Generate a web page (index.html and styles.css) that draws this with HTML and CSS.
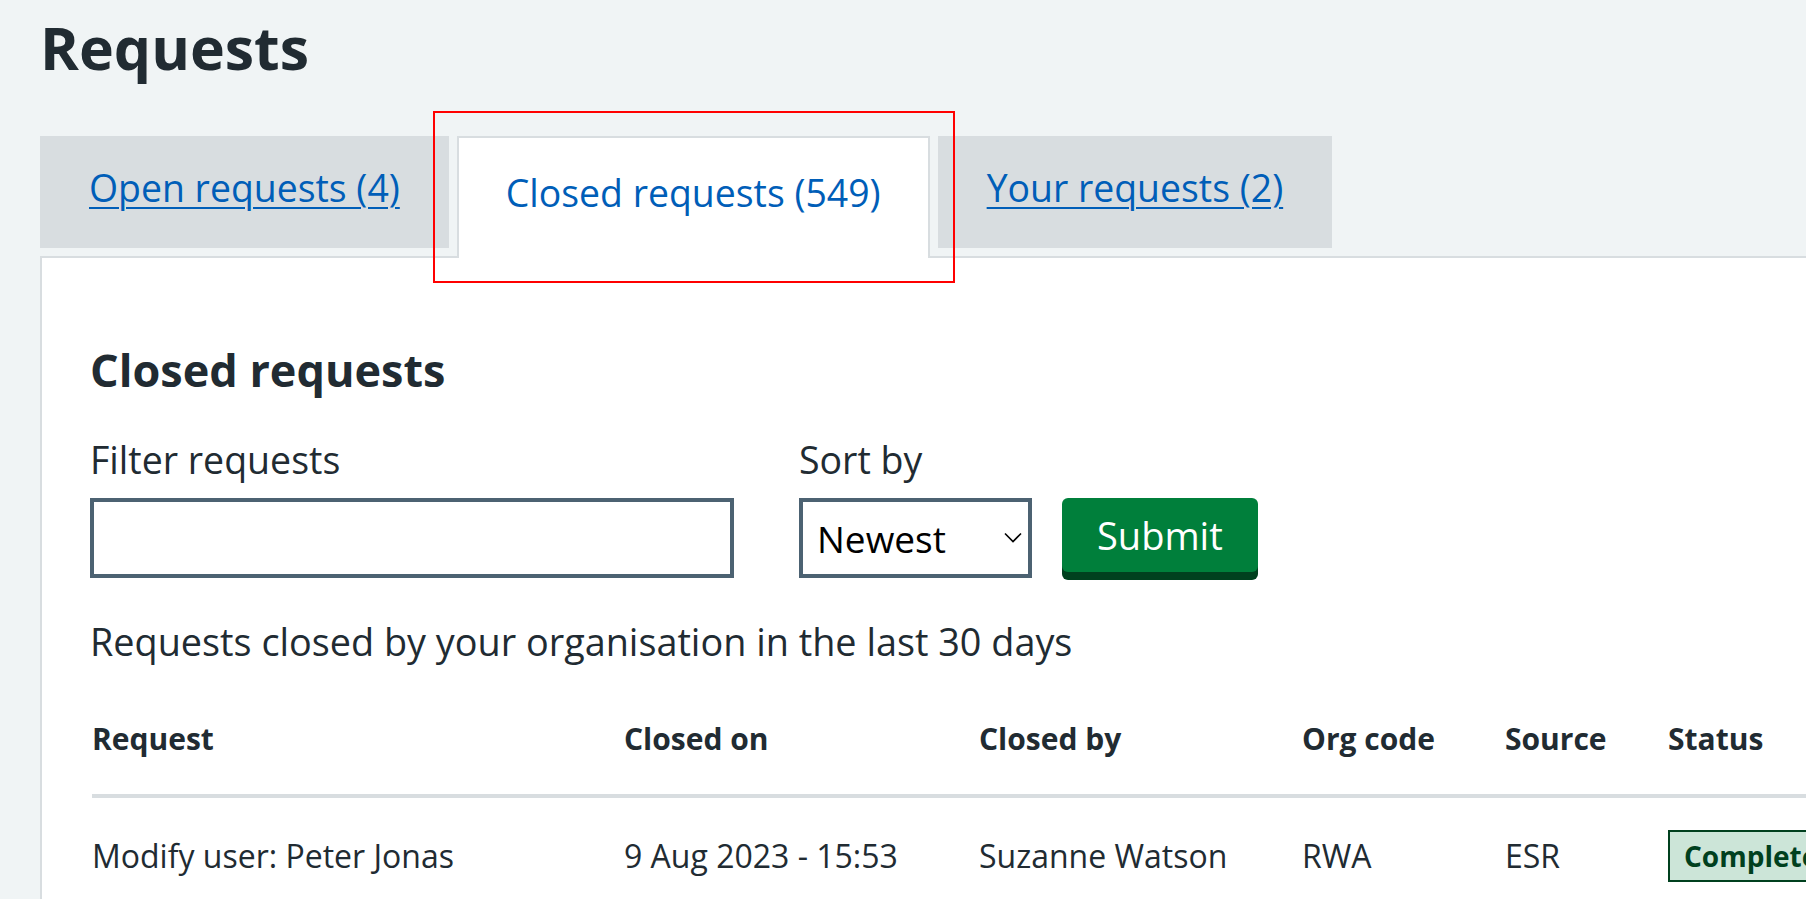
FILE: index.html
```html
<!DOCTYPE html>
<html lang="en">
<head>
  <meta charset="UTF-8">
  <title>Requests</title>
  <link rel="stylesheet" href="styles.css">
</head>
<body>
<div class="page">
  <h1 class="pageTitle">Requests</h1>

  <ul class="tabList">
    <li class="tab"><a href="#open">Open requests (4)</a></li>
    <li class="tab selected"><a href="#closed">Closed requests (549)</a></li>
    <li class="tab"><a href="#yours">Your requests (2)</a></li>
  </ul>

  <div class="panel" id="closed">
    <h2 class="panelTitle">Closed requests</h2>

    <form class="filterForm">
      <div class="field filter">
        <label for="filter">Filter requests</label>
        <input type="text" id="filter" class="textInput">
      </div>
      <div class="field sort">
        <label for="sort">Sort by</label>
        <div class="selectWrap">
          <select id="sort" class="selectInput">
            <option>Newest</option>
            <option>Oldest</option>
          </select>
          <svg class="chevron" width="18" height="11" viewBox="0 0 18 11">
            <path d="M1 1.5 L9 9.5 L17 1.5" fill="none" stroke="#000" stroke-width="1.6"/>
          </svg>
        </div>
      </div>
      <button type="button" class="btnSubmit">Submit</button>
    </form>

    <p class="hint">Requests closed by your organisation in the last 30 days</p>

    <table class="requestTable">
      <colgroup>
        <col class="c1"><col class="c2"><col class="c3"><col class="c4"><col class="c5"><col class="c6">
      </colgroup>
      <thead>
        <tr>
          <th>Request</th>
          <th>Closed on</th>
          <th>Closed by</th>
          <th>Org code</th>
          <th>Source</th>
          <th>Status</th>
        </tr>
      </thead>
      <tbody>
        <tr>
          <td>Modify user: Peter Jonas</td>
          <td>9 Aug 2023 - 15:53</td>
          <td>Suzanne Watson</td>
          <td>RWA</td>
          <td>ESR</td>
          <td><strong class="tag green">Complete</strong></td>
        </tr>
      </tbody>
    </table>
  </div>
</div>

<!-- highlight box drawn over the selected tab -->
<div class="highlight"></div>
</body>
</html>
```

FILE: styles.css
```css
/*base*/
html, body {
  overflow: hidden;
}
body {
  margin: 0;
  background: #f0f4f5;
  color: #212b32;
  font-family: "Open Sans", "Noto Sans", sans-serif;
}
a {
  color: #005eb8;
}
.page {
  padding-left: 40px;
}
.pageTitle {
  margin: 11px 0 0;
  font-size: 59px;
  line-height: 72px;
  font-weight: 700;
}

/*tabs*/
.tabList {
  display: flex;
  align-items: flex-start;
  gap: 8px;
  list-style: none;
  margin: 53px 0 0;
  padding: 0;
}
.tab {
  background: #d8dde0;
  padding: 24px 49px 32px;
  font-size: 37.4px;
  line-height: 56px;
}
.tab a {
  text-decoration-thickness: 2px;
  text-underline-offset: 5px;
}
.tab.selected {
  position: relative;
  z-index: 1;
  background: #fff;
  border: 2px solid #d8dde0;
  border-bottom: 0;
  padding: 27px 47px 37px;
}
.tab.selected a {
  text-decoration: none;
}

/*panel*/
.panel {
  width: 2000px;
  margin-top: -2px;
  background: #fff;
  border: 2px solid #d8dde0;
  padding: 80px 0 40px 48px;
}
.panelTitle {
  margin: 0 0 30px;
  font-size: 45px;
  line-height: 64px;
  font-weight: 700;
}
.filterForm {
  display: flex;
  align-items: flex-start;
}
.field label {
  display: block;
  font-size: 37.5px;
  line-height: 56px;
  margin-bottom: 10px;
}
.field.filter {
  margin-right: 65px;
}
.field.sort {
  margin-right: 30px;
}
.textInput {
  box-sizing: border-box;
  width: 644px;
  height: 80px;
  border: 4px solid #4c6272;
  border-radius: 0;
  font: inherit;
  font-size: 38px;
  padding: 0 10px;
}
.selectWrap {
  position: relative;
}
.selectInput {
  box-sizing: border-box;
  width: 233px;
  height: 80px;
  border: 4px solid #4c6272;
  border-radius: 0;
  background: #fff;
  color: #000;
  font-family: inherit;
  font-size: 37px;
  padding: 0 40px 0 14px;
  appearance: none;
}
.chevron {
  position: absolute;
  left: 205px;
  top: 34px;
  pointer-events: none;
}
.btnSubmit {
  margin-top: 66px;
  height: 74px;
  padding: 0 35px;
  border: 0;
  border-radius: 6px;
  background: #007f3b;
  box-shadow: 0 8px 0 #00401e;
  color: #fff;
  font-family: inherit;
  font-size: 38px;
  line-height: 74px;
}
.hint {
  margin: 36px 0 0;
  font-size: 37.8px;
  line-height: 56px;
}

/*table*/
.requestTable {
  table-layout: fixed;
  border-collapse: collapse;
  width: 1828px;
  margin-left: 2px;
  font-size: 32px;
  line-height: 48px;
}
.requestTable .c1 { width: 532px; }
.requestTable .c2 { width: 355px; }
.requestTable .c3 { width: 323px; }
.requestTable .c4 { width: 203px; }
.requestTable .c5 { width: 163px; }
.requestTable .c6 { width: 252px; }
.requestTable th {
  text-align: left;
  font-size: 30px;
  font-weight: 700;
  padding: 45px 0 31px;
  border-bottom: 4px solid #d8dde0;
}
.requestTable td {
  padding: 32px 0 20px;
  white-space: nowrap;
}
.tag {
  display: inline-block;
  font-size: 28px;
  line-height: 28px;
  font-weight: 700;
  padding: 10px 14px;
  border: 2px solid;
}
.tag.green {
  background: #cce5d8;
  color: #00401e;
  border-color: #00401e;
}

/*annotation*/
.highlight {
  position: absolute;
  left: 433px;
  top: 111px;
  width: 518px;
  height: 168px;
  border: 2px solid #f00;
}
```
